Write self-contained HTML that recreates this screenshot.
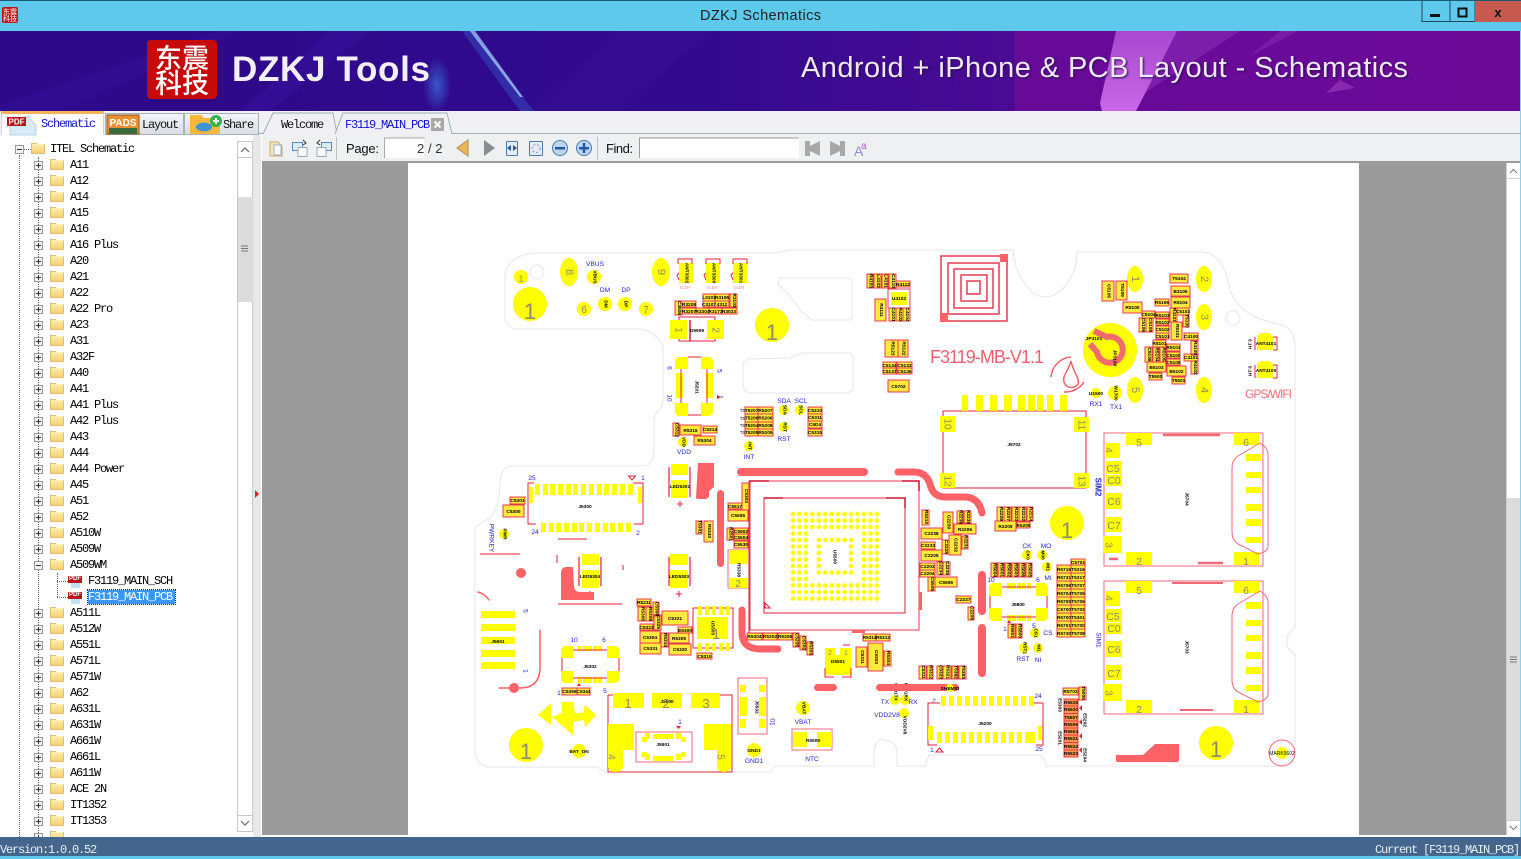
<!DOCTYPE html>
<html><head><meta charset="utf-8"><title>DZKJ Schematics</title>
<style>
html,body{margin:0;padding:0;width:1521px;height:859px;overflow:hidden;background:#fff}
.a{position:absolute}
#tree{left:0;top:141px;width:237px;height:696px;overflow:hidden;font:12px/16px "Liberation Mono",monospace;letter-spacing:-1.2px;color:#000}
.n{position:relative;height:16px;padding-left:70px;white-space:pre}
.n:before{content:"";position:absolute;left:34px;top:4px;width:7px;height:7px;border:1px solid #999;background:linear-gradient(#333,#333) center/5px 1px no-repeat,linear-gradient(#333,#333) center/1px 5px no-repeat,#f2f2f2}
.m:before{background:linear-gradient(#333,#333) center/5px 1px no-repeat,#f2f2f2}
.n:after{content:"";position:absolute;left:50px;top:2px;width:14px;height:11px;background:linear-gradient(#fff0b8,#f5cd6a);box-shadow:inset 0 0 0 1px #e0bd70;clip-path:polygon(0 0,40% 0,50% 12%,100% 12%,100% 100%,0 100%)}
.i{padding-left:50px}.i:before{left:15px}.i:after{left:31px}
.p{position:relative;height:16px;padding-left:88px;white-space:pre}
.p:before{content:"PDF";position:absolute;left:68px;top:3px;width:14px;height:7px;background:#b4161c;color:#fff;font:bold 6px/7px "Liberation Sans",sans-serif;letter-spacing:0;text-align:center}
.p:after{content:"";position:absolute;left:71px;top:10px;width:9px;height:5px;background:#bfe3f2}
.s span{background:#3a96f0;color:#fff;outline:1px dotted #222;display:inline-block;line-height:14px;width:87px;margin-top:1px}
.d{border-left:1px dotted #666}.e{border-top:1px dotted #666}
svg{position:absolute;left:0;top:0}
svg text{font-family:"Liberation Sans",sans-serif}
svg text.mono{font-family:"Liberation Mono",monospace;font-size:12px;letter-spacing:-1.2px}
.c{fill:#ffe93c;stroke:#e8384f;stroke-width:1}
.y{fill:#ff0}
.w{fill:#fff}
.pk{fill:#ff6266}
.tr{fill:none;stroke:#ff6266;stroke-linecap:round}
.l{fill:none;stroke:#e0203c;stroke-width:1}
.o{fill:none;stroke:#ee6a78;stroke-width:1}
.bd{fill:none;stroke:#e6e6e6;stroke-width:1}
.t text{font-size:4.8px;text-anchor:middle;fill:#000;font-weight:bold}
.v text{font-size:4.8px;text-anchor:middle;fill:#000;font-weight:bold;writing-mode:vertical-rl}
.b text{font-size:6.6px;text-anchor:middle;fill:#2424d0}
.bv text{font-size:6.6px;text-anchor:middle;fill:#2424d0;writing-mode:vertical-rl}
.g text{text-anchor:middle;fill:#8c8c6a}
.gv text{text-anchor:middle;fill:#8c8c6a;writing-mode:vertical-rl}
</style></head><body>
<div class="a" style="left:0;top:0;width:1521px;height:31px;background:#5fc9ec;border-top:1px solid #1c5a78;box-sizing:border-box"></div>
<div class="a" style="left:0;top:31px;width:1521px;height:80px;background:linear-gradient(90deg,#2c0a88 0,#320a8e 700px,#4a0a94 1014px,#670a98 1015px,#6c0a98 1521px)"></div>
<div class="a" style="left:0;top:111px;width:1521px;height:24px;background:#f0f0f4"></div>
<div class="a" style="left:0;top:135px;width:262px;height:702px;background:#fff"></div>
<div class="a" style="left:253px;top:135px;width:8px;height:702px;background:#e8e8e8"></div>
<div class="a" style="left:262px;top:135px;width:1259px;height:26px;background:#eff0f2"></div>
<div class="a" style="left:262px;top:161px;width:1259px;height:2px;background:#9a9a9a"></div>
<div class="a" style="left:262px;top:163px;width:1244px;height:672px;background:#9a9a9a"></div>
<div class="a" style="left:408px;top:163px;width:951px;height:672px;background:#fff"></div>
<div class="a" style="left:1506px;top:163px;width:14px;height:672px;background:#fff"></div>
<div class="a" style="left:1506px;top:498px;width:14px;height:322px;background:#dcdcdc"></div>
<div class="a" style="left:0;top:837px;width:1521px;height:19px;background:#44668c"></div>
<div class="a" style="left:0;top:856px;width:1521px;height:3px;background:#5fc9ec"></div>
<div class="a" style="left:1520px;top:31px;width:1px;height:806px;background:#8fd0e8"></div>

<div class="a d" style="left:19px;top:155px;height:682px"></div>
<div class="a d" style="left:38px;top:157px;height:680px"></div>
<div class="a d" style="left:57px;top:573px;height:24px"></div>
<div class="a e" style="left:24px;top:149px;width:7px"></div>
<div class="a e" style="left:57px;top:581px;width:11px"></div>
<div class="a e" style="left:57px;top:597px;width:11px"></div>
<div class="a" id="tree">
<div class="n m i">ITEL Schematic</div>
<div class="n">A11</div><div class="n">A12</div><div class="n">A14</div><div class="n">A15</div><div class="n">A16</div><div class="n">A16 Plus</div><div class="n">A20</div><div class="n">A21</div><div class="n">A22</div><div class="n">A22 Pro</div><div class="n">A23</div><div class="n">A31</div><div class="n">A32F</div><div class="n">A40</div><div class="n">A41</div><div class="n">A41 Plus</div><div class="n">A42 Plus</div><div class="n">A43</div><div class="n">A44</div><div class="n">A44 Power</div><div class="n">A45</div><div class="n">A51</div><div class="n">A52</div><div class="n">A510W</div><div class="n">A509W</div><div class="n m">A509WM</div>
<div class="p">F3119_MAIN_SCH</div>
<div class="p s"><span>F3119_MAIN_PCB</span></div>
<div class="n">A511L</div><div class="n">A512W</div><div class="n">A551L</div><div class="n">A571L</div><div class="n">A571W</div><div class="n">A62</div><div class="n">A631L</div><div class="n">A631W</div><div class="n">A661W</div><div class="n">A661L</div><div class="n">A611W</div><div class="n">ACE 2N</div><div class="n">IT1352</div><div class="n">IT1353</div><div class="n"></div>
</div>

<svg width="1521" height="859" viewBox="0 0 1521 859">
<defs>
<pattern id="bb" width="6.46" height="6.5" patternUnits="userSpaceOnUse" x="789.8" y="510.8"><circle cx="3.2" cy="3.2" r="2.3" fill="#ff0"/></pattern>
<linearGradient id="pb" x1="0" y1="0" x2="0" y2="1"><stop offset="0" stop-color="#a848d0"/><stop offset="1" stop-color="#c868e6"/></linearGradient>
<linearGradient id="tb" x1="0" y1="0" x2="0" y2="1"><stop offset="0" stop-color="#f2f4f8"/><stop offset="1" stop-color="#d8dde6"/></linearGradient>
<radialGradient id="gl"><stop offset="0" stop-color="#3a6ad8" stop-opacity=".8"/><stop offset="1" stop-color="#3a6ad8" stop-opacity="0"/></radialGradient>
</defs>

<!-- title bar -->
<rect x="2" y="7" width="16" height="16" rx="2" fill="#c01418"/>
<text x="10" y="14" font-size="7" fill="#fff" text-anchor="middle" style="font-family:'Liberation Sans','Noto Sans CJK SC',sans-serif">东震</text>
<text x="10" y="21" font-size="7" fill="#fff" text-anchor="middle" style="font-family:'Liberation Sans','Noto Sans CJK SC',sans-serif">科技</text>
<text x="700" y="20" font-size="14.5" fill="#222" textLength="121">DZKJ Schematics</text>
<path d="M1422 1v21M1450 1v21M1475 1v21M1422 21.500h53" stroke="#1c4a60" fill="none"/>
<rect x="1476" y="1" width="45" height="21" fill="#c75a4e"/>
<rect x="1430" y="14" width="10" height="3" fill="#111"/>
<rect x="1458.500" y="8.500" width="8" height="8" fill="none" stroke="#111" stroke-width="2"/>
<text x="1498" y="17" font-size="13" font-weight="bold" text-anchor="middle" fill="#111">x</text>

<!-- banner -->
<path d="M0 105L220 31h18L60 111H0z" fill="#3a10a0" opacity=".35"/>
<path d="M240 111L330 31h40L270 111z" fill="#3e16a8" opacity=".3"/>
<ellipse cx="437" cy="85" rx="14" ry="28" fill="url(#gl)"/>
<path d="M462 31h10l62 80h-14z" fill="#3a60d0" opacity=".4"/>
<path d="M470 31h5l48 66-3 0z" fill="#a8d8ff" opacity=".7"/>
<path d="M620 31h90L620 111h-90z" fill="#4016a4" opacity=".18"/>
<path d="M1177 31h63L1138 97z" fill="#8a2cb8" opacity=".6"/>
<path d="M1280 31h18L1248 57z" fill="#8a2cb8" opacity=".5"/>
<path d="M1116 31h61L1136 111h-34l-2-8z" fill="url(#pb)"/>
<path d="M1326 93l14-13 15 8z" fill="#8a28b0"/>
<rect x="147" y="40" width="70" height="59" rx="4" fill="#c70a0a"/>
<g fill="#fff" font-weight="bold" font-size="27">
<text x="155" y="68" style="font-family:'Liberation Sans','Noto Sans CJK SC',sans-serif;font-weight:500">东震</text>
<text x="155" y="93" style="font-family:'Liberation Sans','Noto Sans CJK SC',sans-serif;font-weight:500">科技</text></g>
<text x="232" y="81" font-size="35" font-weight="bold" fill="#f4f0fa" textLength="198">DZKJ Tools</text>
<text x="801" y="77" font-size="29" fill="#efe8f6" textLength="607" style="filter:drop-shadow(1px 1px 1px #2a0a50)">Android + iPhone &amp; PCB Layout - Schematics</text>

<!-- tabs -->
<path d="M258 133.500H1521" stroke="#9fb0b8"/>
<path d="M1.500 135V113h102V135" fill="#fff" stroke="#d0d4da"/>
<rect x="1" y="111" width="103" height="3" fill="#f5b35a"/>
<path d="M10 124l18-8 8 10v9H10z" fill="#d8eaf6" stroke="#b8cfe0"/>
<rect x="7" y="117" width="19" height="9" fill="#b4161c"/>
<text x="16.500" y="124.500" font-size="8" font-weight="bold" fill="#fff" text-anchor="middle">PDF</text>
<text class="mono" x="41" y="127" fill="#1414c8">Schematic</text>
<rect x="105.500" y="113.500" width="78" height="21" fill="url(#tb)" stroke="#a8b0bc"/>
<rect x="107" y="115" width="32" height="19" fill="#e89030" stroke="#8a5a20"/>
<rect x="109" y="128" width="28" height="6" fill="#3a6a3a"/>
<text x="123" y="126" font-size="10" font-weight="bold" fill="#fff" text-anchor="middle">PADS</text>
<text class="mono" x="142" y="128" fill="#111">Layout</text>
<rect x="184.500" y="113.500" width="74" height="21" fill="url(#tb)" stroke="#a8b0bc"/>
<path d="M190 134v-19h11l3 3h16v16z" fill="#f5b83c"/>
<ellipse cx="204" cy="127" rx="8" ry="4.500" fill="#3a96d8"/>
<circle cx="216" cy="121" r="6" fill="#38b050"/>
<path d="M213 121h6M216 118v6" stroke="#fff" stroke-width="2"/>
<text class="mono" x="223" y="128" fill="#111">Share</text>
<path d="M263 134l10-21h60l4 21" fill="#f0f0f4" stroke="#9fb0b8"/>
<path d="M335 134l8-21h104l5 21" fill="#f0f0f4" stroke="#9fb0b8"/>
<text class="mono" x="281" y="128" fill="#111">Welcome</text>
<text class="mono" x="345" y="128" fill="#1010c8">F3119_MAIN_PCB</text>
<rect x="431" y="118" width="13" height="13" fill="#a8a8a8"/>
<path d="M434.500 121.500l6 6m0-6l-6 6" stroke="#fff" stroke-width="2"/>

<!-- left scrollbar -->
<rect x="237.500" y="141.500" width="15" height="690" fill="#fff" stroke="#c8c8c8"/>
<rect x="238" y="197" width="15" height="105" fill="#dcdcdc"/>
<path d="M241 246h7M241 248.500h7M241 251h7" stroke="#777"/>
<path d="M237 157.500h16M237 815.500h16" stroke="#c8c8c8"/>
<path d="M241 152l4-4 4 4M241 821l4 4 4-4" fill="none" stroke="#666" stroke-width="1.200"/>
<path d="M255 490l4 4-4 4z" fill="#e02020"/>

<!-- toolbar -->
<path d="M270 142h8l4 4v10h-12z" fill="#f6e6c0" stroke="#c8a870"/>
<path d="M274 145h7v10h-7z" fill="#fff" stroke="#9ab0c8"/>
<path d="M292.500 142.500h10v8h-10z" fill="#dcecf8" stroke="#5a8ab8"/><path d="M298 147.500h9v9h-9z" fill="#fff" stroke="#9aa8b8"/><path d="M303 140l3 3-3 2" fill="none" stroke="#333"/>
<path d="M321.500 142.500h10v8h-10z" fill="#dcecf8" stroke="#5a8ab8"/><path d="M317 147.500h9v9h-9z" fill="#fff" stroke="#9aa8b8"/><path d="M320 140l-3 3 3 2" fill="none" stroke="#333"/>
<path d="M336.500 137v23" stroke="#c0c0c0"/>
<text x="346" y="153" font-size="13" fill="#111" textLength="33">Page:</text>
<rect x="384" y="138" width="40" height="20" fill="#fff"/><path d="M384.500 158v-20h40" fill="none" stroke="#aaa"/>
<text x="417" y="153" font-size="13" fill="#333">2</text>
<text x="428" y="153" font-size="13" fill="#333">/ 2</text>
<path d="M468 140v16l-11-8z" fill="#e8b85a" stroke="#b89040"/>
<path d="M484 140v16l11-8z" fill="#8c8c8c"/>
<rect x="506.500" y="141.500" width="11" height="14" rx="1" fill="#e4eef8" stroke="#4a78a8"/>
<path d="M507 148l4-3v6zM517 148l-4-3v6z" fill="#2a5a8a"/>
<rect x="529.500" y="141.500" width="13" height="14" rx="1" fill="#e4eef8" stroke="#4a78a8"/>
<circle cx="536" cy="148.500" r="4" fill="none" stroke="#6a90b8" stroke-dasharray="2 2"/>
<circle cx="560" cy="148" r="7.500" fill="#bcd6f0" stroke="#4a7ab0"/><rect x="555" y="147" width="10" height="2.500" fill="#1e5aa0"/>
<circle cx="584" cy="148" r="7.500" fill="#bcd6f0" stroke="#4a7ab0"/><path d="M579 148.250h10M584 143v10" stroke="#1e5aa0" stroke-width="2.500"/>
<path d="M597.500 137v23" stroke="#c0c0c0"/>
<text x="606" y="153" font-size="13" fill="#111" textLength="27">Find:</text>
<rect x="639" y="138" width="160" height="20" fill="#fff"/><path d="M639.500 158v-20h159" fill="none" stroke="#999"/>
<path d="M805 141h5v5l10-5v15l-10-5v5h-5z" fill="#a8a8a8"/>
<path d="M845 141h-5v5l-10-5v15l10-5v5h5z" fill="#a8a8a8"/>
<text x="854" y="156" font-size="14" fill="#8a8ae0">A</text><text x="861" y="149" font-size="10" fill="#c050c0">a</text>

<!-- right scrollbar -->
<path d="M1506 178.500h14M1506 820.500h14M1506.500 163v672" stroke="#d0d0d0"/>
<path d="M1510 173l3.500-3.500 3.500 3.500M1510 826l3.500 3.500 3.500-3.500" fill="none" stroke="#777"/>
<path d="M1510 657h7M1510 659.500h7M1510 662h7" stroke="#777"/>

<!-- status -->
<text class="mono" x="0" y="853" fill="#e8eef4" textLength="96">Version:1.0.0.52</text>
<text class="mono" x="1375" y="853" fill="#e8eef4" textLength="144">Current [F3119_MAIN_PCB]</text>

<!-- BOARD OUTLINE -->
<path class="bd" d="M537 253H777L790 250H1013C1015 275 1030 297 1045 297C1062 297 1077 275 1077 252H1200C1215 252 1225 262 1230 290C1240 318 1270 322 1282 325C1290 328 1295 335 1295 345V628C1285 632 1283 650 1295 654V745C1295 757 1287 766 1275 766H1180L1178 762H1115L1113 766H1046L1045 760L1040 755H929L925 766H897V750C897 744 885 738 880 740C875 742 874 748 874 755V766H775L770 772H604L598 767H490C481 767 475 760 475 750V527L490 518C497 510 500 495 500 482C500 472 505 466 512 466H642C650 466 654 460 654 450V420C655 410 663 410 663 400V350C663 340 650 329 640 329H517C510 329 505 323 505 317V277C505 262 520 253 537 253Z"/>
<circle class="bd" cx="537" cy="272" r="7"/>
<circle class="bd" cx="1233" cy="318" r="7"/>
<path class="bd" d="M780 278H850L852 281V318L850 320H812L802 312L788 294L778 285Z"/>
<path class="bd" d="M853 356L850 353H802L790 358L748 359L743 363V388L748 393H848L853 390Z"/>

<!-- Large mounting pads -->
<g class="y">
<circle cx="530" cy="304" r="17"/><circle cx="772" cy="325" r="17"/><circle cx="526" cy="745" r="17"/><circle cx="1067" cy="523" r="17"/><circle cx="1216" cy="743" r="17"/>
<ellipse cx="569" cy="272" rx="9" ry="14"/><ellipse cx="661" cy="272" rx="9" ry="14"/>
<circle cx="521" cy="277" r="7"/><circle cx="584" cy="309" r="7"/><circle cx="646" cy="309" r="7"/>
<circle cx="594" cy="277" r="7"/><circle cx="605" cy="304" r="7"/><circle cx="625" cy="304" r="7"/>
<ellipse cx="1135" cy="279" rx="8" ry="13"/><ellipse cx="1204" cy="279" rx="8" ry="13"/><ellipse cx="1204" cy="317" rx="8" ry="13"/><ellipse cx="1204" cy="390" rx="8" ry="13"/><ellipse cx="1135" cy="390" rx="8" ry="13"/>
<circle cx="1110" cy="350" r="27"/>
<circle cx="1096" cy="393" r="5"/><circle cx="1115" cy="393" r="7"/>
<circle cx="683" cy="442" r="5"/><circle cx="784" cy="410" r="5"/><circle cx="800" cy="410" r="5"/><circle cx="784" cy="427" r="5"/><circle cx="749" cy="446" r="5"/>
<circle cx="504" cy="534" r="5"/><circle cx="579" cy="751" r="7"/><circle cx="803" cy="708" r="7"/><circle cx="754" cy="750" r="7"/>
<circle cx="895" cy="700" r="5"/><circle cx="905" cy="700" r="5"/><circle cx="904" cy="713" r="5"/>
<circle cx="1027" cy="555" r="5"/><circle cx="1042" cy="555" r="5"/><circle cx="1047" cy="567" r="5"/><circle cx="1035" cy="633" r="5"/><circle cx="1024" cy="648" r="5"/><circle cx="1038" cy="648" r="5"/>
</g>
<g class="g">
<text x="530" y="319" font-size="22">1</text><text x="772" y="340" font-size="22">1</text><text x="526" y="759" font-size="22">1</text><text x="1067" y="538" font-size="22">1</text><text x="1216" y="757" font-size="22">1</text>
<text x="521" y="282" font-size="9">1</text><text x="584" y="313" font-size="10">6</text><text x="646" y="313" font-size="10">7</text>
</g>
<g class="gv" font-size="11">
<text x="569" y="272">8</text><text x="661" y="272">9</text><text x="1135" y="279">1</text><text x="1204" y="279">2</text><text x="1204" y="317">3</text><text x="1204" y="390">4</text><text x="1135" y="390">5</text>
</g>

<!-- ANT inductors -->
<path class="y" d="M679 263h14v20h-14zM706 263h14v20h-14zM733 263h14v20h-14z"/>
<path class="l" d="M678 264v-5h14v5M706 264v-5h14v5M733 264v-5h14v5M679 273l-2 2 2 5M706 273l-2 2 2 5M733 273l-2 2 2 5"/>
<g class="v"><text x="686" y="273">ANT3302</text><text x="713" y="273">ANT3300</text><text x="740" y="273">ANT3301</text></g>
<g fill="#f07080" font-size="4.500" text-anchor="middle"><text x="685" y="289">0.1H</text><text x="712" y="289">0.1H</text><text x="739" y="289">0.1H</text></g>

<!-- D5509 -->
<path class="y" d="M670 320h17v19h-17zM707 320h17v19h-17z"/>
<path class="l" d="M679 320v-3h36v3M679 339v2h36v-2"/><path d="M690 320v21" stroke="#e0203c" stroke-width="1.500"/>
<g class="t"><text x="697" y="332">D5509</text></g>
<g class="gv" font-size="10"><text x="678" y="330">1</text><text x="715" y="330">2</text></g>

<!-- J5201 -->
<path class="y" d="M675 360l3-3h10v12h-13zM701 357h9l3 3v9h-12zM675 403h13v13h-10l-3-3zM701 403h12v10l-3 3h-9zM676 373h7v25h-7zM706 373h7v25h-7z"/>
<path class="l" d="M688 357h13M688 415h13M681 369v34M707 369v34"/>
<g class="v"><text x="696" y="387">J5201</text></g>
<g class="bv"><text x="669" y="368">6</text><text x="719" y="371">5</text><text x="669" y="398">10</text><text x="720" y="397">1</text></g>
<path d="M717 395l4 2-4 2z" fill="#e0203c"/>

<!-- coil -->
<g fill="none" stroke="#e63a52" stroke-width="1.500"><rect x="941" y="256" width="66" height="65"/><rect x="948" y="263" width="51" height="51"/><rect x="954" y="269" width="39" height="39"/><rect x="961" y="275" width="26" height="26"/><rect x="967" y="281" width="13" height="13"/></g>
<path class="pk" d="M1000 254h8v8h-8zM940 313h8v9h-8z"/>
<text x="930" y="363" font-size="18" fill="#f06070" textLength="114">F3119-MB-V1.1</text>

<!-- JP ring + drop -->
<path d="M1094 331L1107 337A13 13 0 1 1 1097 352L1090 344" fill="none" stroke="#f06a70" stroke-width="6"/>
<g class="t"><text x="1094" y="340">JP3101</text></g><g class="v"><text x="1114" y="358">JP3100</text><text x="1115" y="393">W1700</text></g>
<g class="t"><text x="1096" y="395">U1500</text></g>
<path d="M1051 377A22 22 0 0 1 1071 357M1064 392A22 22 0 0 0 1084 382M1071 361C1068 372 1062 376 1064 382C1067 390 1076 388 1078 384C1080 378 1073 372 1071 361Z" fill="none" stroke="#f0606a" stroke-width="1.500"/>
<g class="b"><text x="1096" y="406">RX1</text><text x="1116" y="409">TX1</text></g>
<text x="1245" y="398" font-size="12" fill="#f07078" textLength="47">GPS/WIFI</text>

<!-- ANT410x -->
<path class="y" d="M1257 336l4-3h8l4 3v14h-16zM1257 364l4-3h8l4 3v14h-16z"/>
<path class="l" d="M1273 337h4v13h-4M1273 365h4v13h-4M1255 337v13M1255 365v13"/>
<g class="t"><text x="1266" y="345">ANT4101</text><text x="1266" y="372">ANT4100</text></g>
<g class="v"><text x="1249" y="344">0.1H</text><text x="1249" y="371">0.1H</text></g>

<!-- J5300 -->
<path class="l" d="M534 483h-6v41h8M633 483h10v41h-9"/>
<path class="y" d="M535 484h5v11h-5zM543 484h5v11h-5zM550 484h5v11h-5zM558 484h5v11h-5zM566 484h5v11h-5zM573 484h5v11h-5zM581 484h5v11h-5zM589 484h5v11h-5zM597 484h5v11h-5zM604 484h5v11h-5zM612 484h5v11h-5zM620 484h5v11h-5zM628 484h5v11h-5zM541 523h5v9h-5zM549 523h5v9h-5zM556 523h5v9h-5zM564 523h5v9h-5zM572 523h5v9h-5zM579 523h5v9h-5zM587 523h5v9h-5zM595 523h5v9h-5zM603 523h5v9h-5zM610 523h5v9h-5zM618 523h5v9h-5zM626 523h5v9h-5zM529 487h4v16h-4zM638 487h4v16h-4z"/>
<g class="t"><text x="585" y="508">J5300</text></g>
<g class="b"><text x="532" y="480">25</text><text x="643" y="480">1</text><text x="535" y="534">24</text><text x="638" y="535">2</text></g>
<path d="M628.500 476h7l-3.500 4z" fill="none" stroke="#e0203c"/>
<path class="c" d="M510 497h15v7h-15zM503 505h21v12h-21z"/>
<g class="t"><text x="517.500" y="502">C5301</text><text x="513.500" y="513">C5300</text></g>
<g class="bv"><text x="491" y="538">PWRKEY</text></g>
<g class="v"><text x="504" y="534">PWR</text></g>
<path d="M480 554h40M558 539h29" stroke="#ee6a78" stroke-width="1.500" fill="none"/>

<!-- LEDs -->
<path class="y" d="M671 464h17v11h-17zM671 480h17v18h-17zM582 554h17v11h-17zM582 570h17v18h-17zM670 554h18v11h-18zM670 570h18v18h-18z"/>
<path d="M669 467v30M690 467v30M579 557v29M601 557v29M669 557v29M690 557v29" stroke="#e0203c" stroke-width="1.200"/>
<g class="t"><text x="680" y="488">LED5301</text><text x="590" y="578">LED5304</text><text x="679" y="578">LED5303</text></g>
<path d="M680 501v6M677 504h6M679 591v6M676 594h6M590 591v5M587 593h6" stroke="#e0203c"/>
<path class="pk" d="M698 463h16v24l-5 4v6l-3 2h-8a2 2 0 0 1-2-2zM561 600V573q0-6 6-6h6l1 20q1 5 6 5h14v8z"/>
<rect class="pk" x="717" y="490" width="7" height="77" rx="3.500"/>
<rect class="pk" x="737" y="468" width="131" height="8" rx="4"/>
<path class="tr" d="M898 472H914Q926 472 930 484Q933 497 945 497H966Q979 498 982 513" stroke-width="7"/>
<path class="tr" d="M742 610V632Q742 649 760 649H778" stroke-width="7"/>
<circle class="pk" cx="521" cy="573" r="5"/>
<path d="M558 604h64" stroke="#ee6a78" stroke-width="1.500"/>
<path d="M557 555v8M623 565v5" stroke="#ee6a78" stroke-width="1.500"/>

<!-- U4103 -->
<rect x="888" y="289" width="22" height="19" fill="#fff" stroke="#e8384f"/>
<path class="y" d="M891 292h16v13h-16z"/>
<g class="t"><text x="899" y="300">U4103</text></g>

<!-- components left block -->
<path class="c" d="M703 294h12v7h-12zM715 294h14v7h-14zM703 301h12v6h-12zM715 301h14v6h-14zM682 301h14v6h-14zM682 308h14v6h-14zM696 308h13v6h-13zM709 308h13v6h-13zM722 308h15v6h-15zM730 294h7v13h-7zM675 301h7v14h-7z
M673 423h6v13h-6zM680 425h21v10h-21zM703 426h14v7h-14zM694 436h21v9h-21z
M745 407h13v7h-13zM745 414h13v8h-13zM745 422h13v7h-13zM745 429h13v7h-13zM758 407h15v7h-15zM758 414h15v8h-15zM758 422h15v7h-15zM758 429h15v7h-15z
M808 407h14v7h-14zM808 414h14v7h-14zM808 421h14v7h-14zM808 429h14v7h-14z
M742 483h7v27h-7zM728 503h14v6h-14zM728 510h20v11h-20zM704 521h9v21h-9zM696 521h6v13h-6zM727 528h6v12h-6zM734 528h14v6h-14zM734 534h14v6h-14zM734 541h14v7h-14z
M637 599h14v7h-14zM638 607h8v14h-8zM646 607h7v14h-7zM653 602h6v14h-6zM654 615h7v15h-7zM640 624h13v6h-13zM640 631h20v12h-20zM640 643h21v11h-21zM662 611h26v14h-26zM661 633h7v14h-7zM669 633h20v10h-20zM669 644h22v11h-22zM678 627h14v6h-14zM697 653h15v6h-15z
M747 633h15v7h-15zM763 633h14v7h-14zM778 633h14v7h-14zM793 633h6v14h-6zM800 636h6v14h-6zM807 642h6v13h-6z
M562 688h15v7h-15zM577 688h13v7h-13z
M863 634h13v7h-13zM876 634h14v7h-14zM856 647h11v20h-11zM868 643h15v28h-15zM884 651h7v15h-7z
M919 666h7v13h-7zM927 666h6v13h-6zM937 666h6v13h-6zM943 666h8v13h-8zM952 666h6v13h-6zM959 666h7v13h-7z
M867 274h6v14h-6zM874 274h7v14h-7zM882 274h6v14h-6zM889 274h7v14h-7zM896 281h14v6h-14zM875 299h11v22h-11zM889 308h7v13h-7zM896 308h7v13h-7zM903 308h7v13h-7z
M885 340h13v17h-13zM898 340h10v17h-10zM883 362h13v6h-13zM897 362h15v6h-15zM883 368h13v6h-13zM897 368h15v6h-15zM888 380h21v12h-21z"/>
<g class="t">
<text x="709" y="299">L3101</text><text x="722" y="299">R3106</text><text x="709" y="306">C3107</text><text x="722" y="306">4312</text><text x="689" y="306">R3208</text><text x="689" y="313">R3207</text><text x="702.500" y="313">R3304</text><text x="715.500" y="313">R3173</text><text x="729" y="313">R3023</text>
<text x="690.500" y="432">R5315</text><text x="710" y="431">C5314</text><text x="704.500" y="442">R5304</text>
<text x="751.500" y="412">T5207</text><text x="751.500" y="419.500">T5206</text><text x="751.500" y="427">T5204</text><text x="751.500" y="434">T5205</text><text x="765.500" y="412">R5207</text><text x="765.500" y="419.500">R5206</text><text x="765.500" y="427">R5208</text><text x="765.500" y="434">R5209</text>
<text x="815" y="412">C5310</text><text x="815" y="419">C5311</text><text x="815" y="426">C5D4</text><text x="815" y="434">C5315</text>
<text x="735" y="508">C5517</text><text x="738" y="517">C5505</text><text x="741" y="533">C5502</text><text x="741" y="539">C5504</text><text x="741" y="546">C5530</text>
<text x="644" y="604">R5211</text><text x="646.500" y="629">C5323</text><text x="650" y="639">C5304</text><text x="650.500" y="650">C5331</text><text x="675" y="620">C5321</text><text x="679" y="640">R5305</text><text x="680" y="651">C5320</text><text x="685" y="632">E5300</text><text x="704.500" y="658">C5310</text>
<text x="754.500" y="638">R5304</text><text x="770" y="638">R5302</text><text x="785" y="638">R5306</text>
<text x="569.500" y="693">C5356</text><text x="583.500" y="693">C5344</text>
<text x="869.500" y="639">R5311</text><text x="883" y="639">R5312</text>
<text x="903" y="286">R4112</text><text x="898.500" y="388">C5702</text>
<text x="889.500" y="367">C5134</text><text x="904.500" y="367">C5133</text><text x="889.500" y="373">C5137</text><text x="904.500" y="373">C5136</text>
<text x="498" y="643">J5601</text>
</g>
<g class="v">
<text x="733.500" y="300.500">R3103</text><text x="678.500" y="308">C3506</text><text x="676" y="430">C5312</text>
<text x="745.500" y="496">C5303</text><text x="708.500" y="531">R5340</text><text x="699" y="527">T5301</text><text x="730" y="534">R2501</text>
<text x="642" y="614">R5305</text><text x="649.500" y="614">R5308</text><text x="656" y="609">C5308</text><text x="657.500" y="622">C5325</text><text x="664.500" y="640">R5310</text>
<text x="796" y="640">C5205</text><text x="803" y="643">C5302</text><text x="810" y="648">R5303</text>
<text x="861.500" y="657">C5311</text><text x="875.500" y="657">C5303</text><text x="887.500" y="658">R5304</text>
<text x="922.500" y="672">C5311</text><text x="930" y="672">R5312</text><text x="940" y="672">C5320</text><text x="947" y="672">R5321</text><text x="955" y="672">T5382</text><text x="962.500" y="672">T5383</text>
<text x="870" y="281">R4103</text><text x="877.500" y="281">L4102</text><text x="885" y="281">L4101</text><text x="892.500" y="281">C4110</text>
<text x="880.500" y="310">R4111</text><text x="892.500" y="314.500">C4101</text><text x="899.500" y="314.500">R4102</text><text x="906.500" y="314.500">C4104</text>
<text x="892" y="348.500">R5123</text><text x="903" y="348.500">R5122</text>
<text x="594" y="277">VBUS</text><text x="605" y="304">DM</text><text x="625" y="304">DP</text>
<text x="683" y="442">VDD</text><text x="784" y="410">SDA</text><text x="800" y="410">SCL</text><text x="784" y="427">RST</text><text x="749" y="446">INT</text>
<text x="803" y="708">VBAT</text><text x="895" y="692">U801TX</text><text x="905" y="692">U801RX</text>
</g>
<g fill="#111" font-size="4.500" text-anchor="end"><text x="745" y="412">T5</text><text x="745" y="420">T5</text><text x="745" y="427">T5</text><text x="745" y="434">T5</text></g>
<g class="t"><text x="579" y="753">BAT_ON</text><text x="754" y="752">GND1</text></g>
<g class="b">
<text x="595" y="266">VBUS</text><text x="605" y="292">DM</text><text x="626" y="292">DP</text><text x="684" y="454">VDD</text>
<text x="784" y="403">SDA</text><text x="801" y="403">SCL</text><text x="784" y="441">RST</text><text x="749" y="459">INT</text>
<text x="803" y="724">VBAT</text><text x="812" y="761">NTC</text><text x="754" y="763">GND1</text>
<text x="885" y="704">TX</text><text x="913" y="704">RX</text><text x="887" y="717">VDD2V8</text>
<text x="1027" y="548">CK</text><text x="1046" y="548">MO</text><text x="1048" y="635">CS</text><text x="1023" y="661">RST</text><text x="1038" y="662">NI</text>
<text x="1048" y="580">MI</text>
<text x="574" y="642">10</text><text x="604" y="642">6</text><text x="559" y="695">1</text><text x="605" y="693">5</text><text x="680" y="724">1</text>
<text x="991" y="582">10</text><text x="1038" y="582">6</text><text x="1005" y="631">1</text><text x="1034" y="628">5</text>
<text x="934" y="703">2</text><text x="1038" y="698">24</text><text x="932" y="752">1</text><text x="1039" y="751">25</text>
</g>
<g class="bv"><text x="525" y="611">5</text><text x="525" y="671">1</text><text x="772" y="722">01</text><text x="1098" y="487" style="font-size:8px;font-weight:bold">SIM2</text><text x="1098" y="640">SIM1</text></g>

<!-- J5601 -->
<path class="y" d="M481 611h34v7h-34zM481 624h34v7h-34zM481 650h34v7h-34zM481 662h34v7h-34zM481 637h34v7h-34z" style="mix-blend-mode:multiply"/>
<path class="tr" d="M478 592Q485 594 489 600M540 630V667Q540 688 520 688H499" stroke-width="1.500"/>
<circle class="pk" cx="514" cy="688" r="5"/>
<!-- J5302 -->
<path class="y" d="M561 649l3-3h9v12h-12zM607 646h9l3 3v9h-12zM561 671h12v12h-9l-3-3zM607 671h12v9l-3 3h-9zM578 646h4v5h-4zM583 646h4v5h-4zM588 646h4v5h-4zM593 646h4v5h-4zM598 646h4v5h-4zM578 677h4v6h-4zM583 677h4v6h-4zM588 677h4v6h-4zM593 677h4v6h-4zM598 677h4v6h-4z"/>
<path class="l" d="M562 658v13M619 658v13M573 650h34M573 678h34"/>
<g class="t"><text x="590" y="668">J5302</text></g>
<path d="M577 686l2-3 2 3z" fill="#e0203c"/>
<!-- arrow -->
<path class="y" d="M551 703L538 715L551 725ZM562 702H573L575 713H583L585 705L596 715L585 727L584 720L573 722V735L552 717L562 713Z"/>
<!-- J5500 -->
<path class="l" d="M608 695h5M720 695h12v77H608v-77" stroke-width="1.200"/>
<path class="y" d="M613 693h31v15h-31zM652 693h30v15h-30zM691 693h29v15h-29zM608 724h26v26h-11v16q0 6-7.500 6t-7.500-6zM704 724h27v42q0 6-7 6t-7-6v-16h-13z"/>
<g class="t"><text x="667" y="703">J5500</text></g>
<g class="g" font-size="13"><text x="628" y="708">1</text><text x="706" y="708">3</text><text x="666" y="708">2</text></g>
<g class="gv" font-size="10"><text x="611" y="757">4</text><text x="720" y="757">5</text></g>
<rect class="o" x="636" y="732" width="56" height="30"/>
<path class="y" d="M653 734h20v5h-20zM645 733h5v6h-5zM676 733h5v6h-5zM642 737h5v5h-5zM681 737h5v5h-5zM653 756h20v5h-20zM645 754h5v6h-5zM676 754h5v6h-5zM642 752h5v5h-5zM681 752h5v5h-5z"/>
<g class="t"><text x="663" y="746">J5501</text></g>
<path d="M676 726h5l-2.500 3z" fill="#e0203c"/>
<!-- J5502 -->
<rect class="o" x="738" y="678" width="29" height="56"/>
<path class="y" d="M740 685h6v7h-6zM740 697h7v19h-7zM740 719h6v9h-6zM759 685h6v7h-6zM759 697h7v19h-7zM759 719h6v9h-6z"/>
<g class="v"><text x="756" y="707">J5502</text></g>
<!-- R5509 -->
<rect class="o" x="792" y="729" width="40" height="21"/>
<path class="y" d="M793 732h14v15h-14zM817 732h15v15h-15z"/>
<g class="t"><text x="813" y="742">R5509</text></g>
<!-- U5303 -->
<rect class="l" x="693" y="608" width="40" height="40" stroke-width="1.200"/>
<path class="y" d="M697 617h31v22h-31zM698 606h4v9h-4zM705 606h4v9h-4zM712 606h4v9h-4zM719 606h4v9h-4zM726 606h4v9h-4zM698 643h4v8h-4zM705 643h4v8h-4zM712 643h4v8h-4zM719 643h4v8h-4zM726 643h4v8h-4z"/>
<g class="v"><text x="712" y="628">U5303</text></g>
<g class="g" font-size="15"><text x="716" y="639">1</text></g>
<!-- R5338 -->
<rect class="o" x="728" y="550" width="21" height="38"/>
<path class="y" d="M729 550h19v14h-19zM729 578h19v10h-19z"/>
<g class="v"><text x="738" y="570">R5338</text></g>
<g class="g" font-size="10"><text x="738" y="587">2</text></g>

<!-- IC -->
<rect class="o" x="750" y="481" width="169" height="149" style="stroke:#e8384f" stroke-width="1.200"/>
<path class="l" d="M764 613V498H905V613H764M765 603l5 5h-5z" stroke-width="1.200"/>
<path d="M749 481h20M902 481h17v10M764 498h19M886 498h19v10" stroke="#d01030" stroke-width="1.500" fill="none"/>
<path d="M749 481v152H790" fill="none" stroke="#e0203c" stroke-width="1"/>
<rect x="790" y="511" width="90.400" height="91" fill="url(#bb)"/>
<rect class="w" x="809.400" y="530.500" width="51.600" height="52"/>
<path d="M815.800 537h38.800v6.500h-38.800zM815.800 569.500h38.800v6.500h-38.800zM815.800 543h6.460v26.500h-6.460zM848.100 543h6.460v26.500h-6.460z" fill="url(#bb)"/>
<g class="v"><text x="834" y="557">U5500</text></g>
<path class="pk" d="M852 630h13v3h-13zM919 592h3v18h-3z"/>

<!-- right of IC -->
<path class="c" d="M922 510h7v15h-7zM921 528h21v11h-21zM943 512h10v21h-10zM954 524h22v10h-22zM957 511h6v12h-6zM964 511h7v12h-7zM921 542h14v7h-14zM921 550h21v11h-21zM942 540h7v14h-7zM949 535h12v20h-12zM962 536h6v13h-6zM920 563h15v7h-15zM920 570h15v7h-15zM937 562h6v13h-6zM943 562h7v13h-7zM935 577h22v10h-22zM928 577h7v14h-7zM956 596h15v7h-15zM968 607h6v13h-6z
M997 507h7v14h-7zM1004 507h7v14h-7zM1012 507h7v14h-7zM1019 507h7v14h-7zM1027 507h6v14h-6zM995 521h21v10h-21zM1017 522h13v6h-13z
M991 563h6v14h-6zM998 563h6v14h-6zM1005 563h6v14h-6zM1012 563h6v14h-6zM1019 563h6v14h-6zM1026 563h6v14h-6zM1008 624h7v14h-7zM1016 624h6v14h-6z
M1071 559h14v6h-14z
M1057 565h14v8h-14zM1071 565h14v8h-14zM1057 573h14v8h-14zM1071 573h14v8h-14zM1057 581h14v8h-14zM1071 581h14v8h-14zM1057 589h14v8h-14zM1071 589h14v8h-14zM1057 597h14v8h-14zM1071 597h14v8h-14zM1057 605h14v8h-14zM1071 605h14v8h-14zM1057 613h14v8h-14zM1071 613h14v8h-14zM1057 621h14v8h-14zM1071 621h14v8h-14zM1057 629h14v8h-14zM1071 629h14v8h-14z
M1063 688h15v7h-15zM1079 687h7v13h-7z"/>
<path d="M1064 699h14v58h-14z" fill="#ff9a4a" stroke="#e8384f"/>
<path d="M1064 706h14M1064 713.500h14M1064 721h14M1064 728h14M1064 735h14M1064 742.500h14M1064 750h14" stroke="#e8384f"/>
<g class="t">
<text x="931.500" y="535">C2238</text><text x="965" y="531">R2206</text><text x="928" y="547">C2233</text><text x="931.500" y="557">C2205</text><text x="927.500" y="568">C2203</text><text x="927.500" y="575">C2204</text><text x="946" y="584">C5506</text><text x="963.500" y="601">C2227</text>
<text x="1005.500" y="528">R2205</text><text x="1023.500" y="527">R5205</text>
<text x="1064" y="571">R5716</text><text x="1078" y="571">T5316</text><text x="1064" y="579">R5731</text><text x="1078" y="579">T5317</text><text x="1064" y="587">R5706</text><text x="1078" y="587">T5707</text><text x="1064" y="595">R5704</text><text x="1078" y="595">T5705</text><text x="1064" y="603">R5705</text><text x="1078" y="603">T5706</text><text x="1064" y="611">C5700</text><text x="1078" y="611">T5702</text><text x="1064" y="619">R5700</text><text x="1078" y="619">T5301</text><text x="1064" y="627">R5701</text><text x="1078" y="627">T5700</text><text x="1064" y="635">R5730</text><text x="1078" y="635">T5708</text>
<text x="1078" y="564">C5701</text><text x="1070.500" y="693">R5702</text>
<text x="1071" y="704">R5519</text><text x="1071" y="711">R5520</text><text x="1071" y="719">T5507</text><text x="1071" y="726">R5506</text><text x="1071" y="733">R5504</text><text x="1071" y="740">R5521</text><text x="1071" y="748">R5522</text><text x="1071" y="755">R5523</text>
<text x="1014" y="446">J5702</text><text x="985" y="725">J5200</text><text x="1018" y="606">J5800</text>
</g>
<g class="v">
<text x="925.500" y="517">R5210</text><text x="948" y="522">C2239</text><text x="960" y="517">R2238</text><text x="967.500" y="517">R2230</text><text x="945.500" y="547">C2225</text><text x="955" y="545">C2232</text><text x="965" y="542">R2231</text><text x="940" y="568">C2234</text><text x="946.500" y="568">C2235</text><text x="931.500" y="584">C5505</text><text x="971" y="613">C2206</text>
<text x="1000.500" y="514">R2208</text><text x="1007.500" y="514">R2207</text><text x="1015.500" y="514">R2210</text><text x="1022.500" y="514">R2212</text><text x="1030" y="514">R2214</text>
<text x="994" y="570">R5604</text><text x="1001" y="570">R5601</text><text x="1008" y="570">R5602</text><text x="1015" y="570">R5603</text><text x="1022" y="570">R5606</text><text x="1029" y="570">R5605</text>
<text x="1011.500" y="631">R5801</text><text x="1019" y="631">R5800</text>
<text x="1027" y="555">CK0</text><text x="1042" y="555">M00</text><text x="1047" y="567">MI1</text><text x="1035" y="633">CS1</text><text x="1024" y="648">RST1</text><text x="1038" y="648">NI1</text>
<text x="1082.500" y="693">T5005</text><text x="1059" y="705">E5303</text><text x="1059" y="738">E5201</text><text x="1084" y="720">E5202</text><text x="1084" y="755">E5204</text>
<text x="904" y="725">VDD2V8</text>
</g>
<!-- D5501 -->
<path class="y" d="M825 648h10v9h-10zM840 648h11v9h-11zM825 655h26v20h-26z"/>
<path class="l" d="M825 668v9h9M851 668v9h-9M843 645h7" stroke-width="1.500"/>
<g class="t"><text x="838" y="663">D5501</text></g>
<g class="g" font-size="7"><text x="830" y="655">2</text><text x="846" y="655">1</text></g>
<rect class="pk" x="814" y="684" width="23" height="7" rx="3.500"/>
<rect class="pk" x="876" y="684" width="83" height="7" rx="3.500"/>
<circle class="y" cx="950" cy="688" r="4"/>
<g class="t"><text x="950" y="690">SHEMID</text></g>

<!-- J5702 -->
<path class="l" d="M943 411H1086V488H943V411" stroke-width="1.200"/>
<path class="y" d="M962 395h6v16h-6zM976 395h7v16h-7zM990 395h7v16h-7zM1004 395h8v16h-8zM1018 395h7v16h-7zM1028 395h7v16h-7zM1037 395h6v16h-6zM1047 395h6v16h-6zM1060 395h7v16h-7zM940 416h15v16h-15zM940 473h15v15h-15zM1074 417h15v15h-15zM1074 473h15v15h-15z"/>
<g class="gv" font-size="10"><text x="947" y="424">10</text><text x="947" y="481">12</text><text x="1081" y="425">11</text><text x="1081" y="481">13</text></g>
<rect class="pk" x="978" y="571" width="8" height="44" rx="4"/>
<rect class="pk" x="978" y="624" width="8" height="53" rx="4"/>
<!-- J5800 -->
<path class="y" d="M989 586l3-3h10v13h-13zM1036 583h9l3 3v10h-12zM989 608h13v13h-10l-3-3zM1036 608h12v10l-3 3h-9zM1007 583h4v6h-4zM1012 583h4v6h-4zM1017 583h4v6h-4zM1022 583h4v6h-4zM1027 583h4v6h-4zM1007 615h4v6h-4zM1012 615h4v6h-4zM1017 615h4v6h-4zM1022 615h4v6h-4zM1027 615h4v6h-4z"/>
<path class="l" d="M990 596v12M1047 596v12M1002 587h34M1002 617h34"/>
<path d="M1007 623l2-3 2 3z" fill="#e0203c"/>
<!-- J5200 -->
<path class="l" d="M940 703h-12v42h9M1030 703h13v42h-7"/>
<path class="y" d="M941 696h5v10h-5zM949 696h5v10h-5zM957 696h5v10h-5zM965 696h5v10h-5zM973 696h5v10h-5zM981 696h5v10h-5zM989 696h5v10h-5zM997 696h5v10h-5zM1005 696h5v10h-5zM1013 696h5v10h-5zM1021 696h5v10h-5zM1029 696h5v10h-5zM937 732h5v11h-5zM945 732h5v11h-5zM953 732h5v11h-5zM961 732h5v11h-5zM969 732h5v11h-5zM977 732h5v11h-5zM985 732h5v11h-5zM993 732h5v11h-5zM1001 732h5v11h-5zM1009 732h5v11h-5zM1017 732h5v11h-5zM1025 732h5v11h-5zM1030 732h5v11h-5zM928 726h5v14h-5zM1038 726h4v14h-4z"/>
<path d="M936 752h7l-3.500-4z" fill="none" stroke="#e0203c"/>
<path d="M1079 708l3-3v6zM1079 722l3-3v6zM1079 736l3-3v6zM1079 750l3-3v6z" fill="#e0203c"/>

<!-- Right top cluster -->
<path class="c" d="M1102 281h12v20h-12zM1116 281h11v19h-11zM1123 302h19v11h-19zM1170 274h18v9h-18zM1171 286h19v10h-19zM1171 297h19v11h-19zM1155 299h14v7h-14zM1142 311h13v7h-13zM1156 312h13v6h-13zM1170 308h7v14h-7zM1177 308h12v7h-12zM1183 315h6v12h-6zM1139 318h7v14h-7zM1146 318h7v14h-7zM1156 319h13v6h-13zM1156 326h13v7h-13zM1156 333h13v6h-13zM1171 322h11v18h-11zM1184 333h14v7h-14zM1153 340h13v7h-13zM1167 344h13v7h-13zM1145 347h7v15h-7zM1153 347h6v15h-6zM1160 347h6v15h-6zM1167 352h13v6h-13zM1167 359h13v6h-13zM1191 341h7v14h-7zM1184 354h14v7h-14zM1191 361h7v13h-7zM1147 362h19v10h-19zM1149 373h13v7h-13zM1167 366h19v10h-19zM1172 377h13v7h-13z"/>
<g class="t">
<text x="1132.500" y="309">R5100</text><text x="1179" y="280">T5104</text><text x="1180.500" y="293">B3105</text><text x="1180.500" y="304">R5104</text><text x="1162" y="304">R5106</text><text x="1148.500" y="316">C5104</text><text x="1162.500" y="317">R5103</text><text x="1183" y="313">C5103</text><text x="1162.500" y="324">R5102</text><text x="1162.500" y="331">C5102</text><text x="1162.500" y="338">C5101</text><text x="1191" y="338">C4100</text><text x="1159.500" y="345">R5101</text><text x="1173.500" y="349">R5103</text><text x="1173.500" y="357">C5100</text><text x="1173.500" y="364">C5105</text><text x="1191" y="359">C4101</text><text x="1156.500" y="369">B5103</text><text x="1155.500" y="378">T5500</text><text x="1176.500" y="373">B5102</text><text x="1178.500" y="382">T5501</text>
</g>
<g class="v">
<text x="1108" y="291">C5105</text><text x="1121.500" y="290">T5109</text><text x="1173.500" y="315">R4121</text><text x="1186" y="321">T5100</text><text x="1142.500" y="325">C5106</text><text x="1149.500" y="325">C5108</text><text x="1176.500" y="331">R5101</text><text x="1148.500" y="354.500">C5108</text><text x="1156" y="354.500">R5104</text><text x="1163" y="354.500">R5105</text><text x="1194.500" y="348">R4100</text><text x="1194.500" y="367.500">R4103</text>
</g>

<!-- SIM 2 -->
<rect class="o" x="1104" y="433" width="159" height="133"/>
<path class="y" d="M1126 433h26v12h-26zM1234 433h25v12h-25zM1126 552h26v13h-26zM1234 552h25v13h-25zM1106 443h14v15h-14zM1106 461h16v13h-16zM1106 475h16v11h-16zM1106 493h16v16h-16zM1106 517h16v15h-16zM1103 536h19v17h-19zM1246 454h15v7h-15zM1246 472h15v6h-15zM1246 487h15v6h-15zM1246 504h15v7h-15zM1246 519h15v7h-15zM1246 537h15v6h-15z"/>
<path class="o" d="M1260 443L1238 456Q1232 460 1232 468V532Q1232 540 1238 544L1258 554Q1268 552 1268 546V454Q1268 448 1260 443Z"/>
<path d="M1163 435h57M1198 563h25M1109 559h9" stroke="#ee6a78" stroke-width="2.500"/>
<g class="v"><text x="1186" y="499">J5704</text></g>
<!-- SIM 1 -->
<rect class="o" x="1104" y="581" width="159" height="133"/>
<path class="y" d="M1126 581h26v12h-26zM1234 581h25v12h-25zM1126 700h26v13h-26zM1234 700h25v13h-25zM1106 591h14v15h-14zM1106 609h16v13h-16zM1106 623h16v11h-16zM1106 641h16v16h-16zM1106 665h16v15h-16zM1103 684h19v17h-19zM1246 602h15v7h-15zM1246 620h15v6h-15zM1246 635h15v6h-15zM1246 652h15v7h-15zM1246 667h15v7h-15zM1246 685h15v6h-15z"/>
<path class="o" d="M1260 591L1238 604Q1232 608 1232 616V680Q1232 688 1238 692L1258 702Q1268 700 1268 694V602Q1268 596 1260 591Z"/>
<path d="M1172 583h51M1180 710h33" stroke="#ee6a78" stroke-width="2"/>
<g class="v"><text x="1186" y="647">J5703</text></g>
<g class="g" font-size="10.500">
<text x="1139" y="446">5</text><text x="1246" y="446">6</text><text x="1139" y="565">2</text><text x="1246" y="565">1</text><text x="1113" y="472">C5</text><text x="1114" y="484">C0</text><text x="1114" y="505">C6</text><text x="1114" y="529">C7</text>
<text x="1139" y="594">5</text><text x="1246" y="594">6</text><text x="1139" y="713">2</text><text x="1246" y="713">1</text><text x="1113" y="620">C5</text><text x="1114" y="632">C0</text><text x="1114" y="653">C6</text><text x="1114" y="677">C7</text>
</g>
<g class="gv" font-size="10"><text x="1108" y="450">4</text><text x="1108" y="545">3</text><text x="1108" y="598">4</text><text x="1108" y="693">3</text></g>

<!-- mark + block -->
<circle class="y" cx="1282" cy="753" r="6"/>
<circle class="o" cx="1282" cy="753" r="13"/>
<text x="1282" y="755" font-size="5" text-anchor="middle" fill="#111">MARK5602</text>
<path class="pk" d="M1116 755H1143L1155 744H1179V760Q1179 762 1177 762H1118Q1116 762 1116 760Z"/>
</svg>
</body></html>
